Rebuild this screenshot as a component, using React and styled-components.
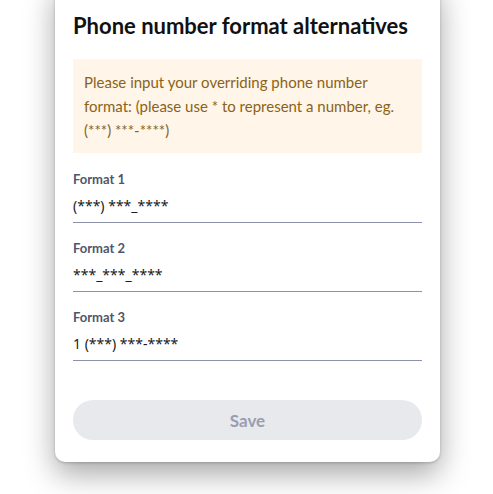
import React from "react";
import styled, { createGlobalStyle } from "styled-components";

const Global = createGlobalStyle`
  html, body { margin: 0; padding: 0; background: #ffffff; }
  body { font-family: Lato, "Noto Sans", sans-serif; overflow: hidden; }
  * { box-sizing: border-box; }
`;

const Page = styled.div`
  display: flex;
  justify-content: center;
  padding-left: 2px;
  width: 493px;
  height: 494px;
  overflow: hidden;
`;

const Card = styled.div`
  width: 385px;
  margin-top: -20px;
  align-self: flex-start;
  background: #ffffff;
  border-radius: 10px;
  padding: 33px 18px 22px;
  box-shadow: 0 12px 30px rgba(0, 0, 0, 0.35), 0 1px 3px rgba(0, 0, 0, 0.2);
  display: flex;
  flex-direction: column;
`;

const Title = styled.h2`
  margin: 0;
  font-family: Lato, sans-serif;
  font-weight: 700;
  font-size: 22px;
  line-height: 26px;
  color: #111111;
`;

const Notice = styled.div`
  margin-top: 20px;
  background: #fff5e9;
  color: #8a6318;
  font-family: Lato, sans-serif;
  font-size: 15px;
  line-height: 24px;
  padding: 11px 11px;
`;

const Fields = styled.div`
  margin-top: 18px;
  display: flex;
  flex-direction: column;
  gap: 17px;
`;

const Field = styled.label`
  display: flex;
  flex-direction: column;
`;

const Label = styled.span`
  font-family: Lato, sans-serif;
  font-weight: 700;
  font-size: 13px;
  line-height: 16px;
  color: #50566a;
  margin-bottom: 4px;
`;

const Input = styled.input`
  height: 32px;
  border: none;
  border-bottom: 1px solid #8e92a6;
  outline: none;
  padding: 0 0 2px;
  background: transparent;
  font-family: "Noto Sans", sans-serif;
  font-size: 14px;
  color: #1a1a1a;
`;

const SaveButton = styled.button`
  margin-top: 39px;
  height: 40px;
  border: none;
  border-radius: 20px;
  background: #e8e9ed;
  color: #9a9db1;
  font-family: Lato, sans-serif;
  font-weight: 700;
  font-size: 17px;
`;

const formats = ["(***) ***_****", "***_***_****", "1 (***) ***-****"];

export default function App() {
  return (
    <>
      <Global />
      <Page>
        <Card>
          <Title>Phone number format alternatives</Title>
          <Notice>
            Please input your overriding phone number format: (please use * to
            represent a number, eg. (***) ***-****)
          </Notice>
          <Fields>
            {formats.map((f, i) => (
              <Field key={i}>
                <Label>Format {i + 1}</Label>
                <Input defaultValue={f} />
              </Field>
            ))}
          </Fields>
          <SaveButton disabled>Save</SaveButton>
        </Card>
      </Page>
    </>
  );
}
